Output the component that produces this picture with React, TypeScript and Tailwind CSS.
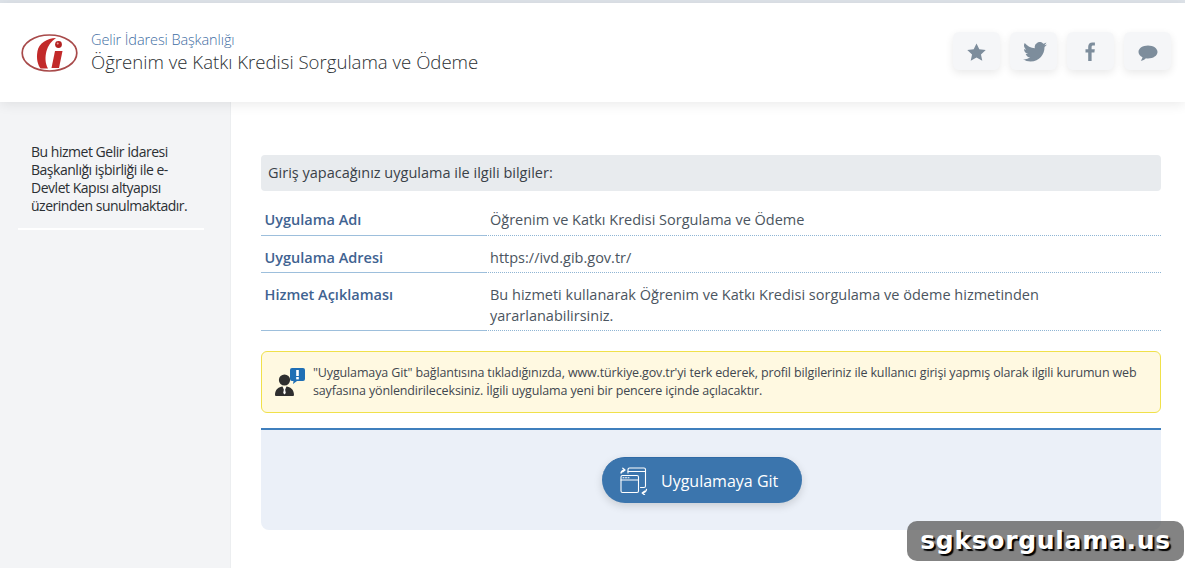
import { ReactNode } from "react"

function GibLogo() {
  return (
    <svg width="58" height="40" viewBox="0 0 58 40" className="block shrink-0">
      <ellipse cx="28.5" cy="20" rx="27.3" ry="18" fill="#fff" stroke="#a84a4a" strokeWidth="1.7" />
      <path d="M35 5 C26 5.500 18 10 16.500 18 C15 26 17 32 19.500 35.500 L27 35.500 C24 30 24 24 25.500 18 C27 12.500 30 8.500 35 5 Z" fill="#c22a2a" />
      <path d="M34 18 L41.500 18 L38 35 L30.500 35 Z" fill="#c22a2a" />
      <circle cx="37.500" cy="11.500" r="3.400" fill="#b32020" />
      <circle cx="36.700" cy="10.500" r="1" fill="#e9a0a0" />
    </svg>
  )
}

function IconButton({ children }: { children: ReactNode }) {
  return (
    <div className="flex h-[38px] w-[47px] items-center justify-center rounded-md bg-[#f5f6f8] pt-[1px] shadow-[0_3px_8px_rgba(0,0,0,0.09)]">
      {children}
    </div>
  )
}

function AdvisorIcon() {
  return (
    <svg width="32" height="30" viewBox="0 0 32 30" className="shrink-0">
      <path d="M18 1 H29 Q31 1 31 3 V12 Q31 14 29 14 H23 L19 17 L19.500 14 H18 Q16 14 16 12 V3 Q16 1 18 1 Z" fill="#1f6fb5" />
      <rect x="22.200" y="3" width="2.600" height="6" fill="#fff" />
      <rect x="22.200" y="10" width="2.600" height="2.400" fill="#fff" />
      <circle cx="10.500" cy="13" r="5.600" fill="#2f2f2f" />
      <path d="M1 28 C1 22 5 20 8.500 19.500 L10.500 24 L12.500 19.500 C16 20 20 22 20 28 Q20 29 19 29 H2 Q1 29 1 28 Z" fill="#2f2f2f" />
      <path d="M9.500 20 H11.500 L11 22 L11.800 26 L10.500 27.500 L9.200 26 L10 22 Z" fill="#fff" />
    </svg>
  )
}

function RedirectIcon() {
  return (
    <svg width="28" height="28" viewBox="0 0 28 28" fill="none" stroke="#fff" strokeWidth="1.100" strokeLinecap="round" strokeLinejoin="round" className="shrink-0">
      <path d="M8 6 V2.500 Q8 1 9.500 1 H24 Q25.500 1 25.500 2.500 V19 Q25.500 20.500 24 20.500 H20.500" />
      <path d="M8 4.500 H25.500" />
      <rect x="1" y="8.500" width="17.500" height="17" rx="1.500" />
      <path d="M1 13 H18.500" />
      <path d="M3 10.800 H4 M5.500 10.800 H6.500 M8 10.800 H9" />
      <path d="M1 6 Q1.500 3.500 4.500 3 M2.800 1.200 L5 3 L2.800 4.800" strokeWidth="1.300" />
      <path d="M26.500 22.500 Q26 25.500 22.500 26 M24.500 24.200 L22.200 26 L24.500 27.800" strokeWidth="1.300" />
    </svg>
  )
}

const rows = [
  { label: "Uygulama Adı", value: "Öğrenim ve Katkı Kredisi Sorgulama ve Ödeme", size: "h-[37px] pt-[10px]" },
  { label: "Uygulama Adresi", value: "https://ivd.gib.gov.tr/", size: "h-[37px] pt-[11px]" },
  {
    label: "Hizmet Açıklaması",
    value: "Bu hizmeti kullanarak Öğrenim ve Katkı Kredisi sorgulama ve ödeme hizmetinden yararlanabilirsiniz.",
    size: "h-[58px] pt-[11px]",
  },
]

export default function App() {
  return (
    <div className="relative h-[568px] w-[1185px] overflow-hidden bg-white font-['Open_Sans',sans-serif] text-[#454f5b]">
      <div className="h-[3px] bg-[#dfe4ea]" />

      {/* Header */}
      <header className="relative z-10 flex h-[99px] items-center justify-between bg-white pl-[21px] pr-[14px] shadow-[0_2px_12px_rgba(0,0,0,0.09)]">
        <div className="flex items-center">
          <GibLogo />
          <div className="ml-[12px]">
            <div className="text-[14.5px] leading-[19px] tracking-[-0.1px] font-light text-[#3f6ea3]">Gelir İdaresi Başkanlığı</div>
            <div className="text-[18.6px] leading-[26px] font-light text-[#2b2f33]">Öğrenim ve Katkı Kredisi Sorgulama ve Ödeme</div>
          </div>
        </div>
        <div className="-mt-[3px] flex gap-[10px]">
          <IconButton>
            <svg width="19" height="18" viewBox="0 0 24 23" fill="#7d8d9c">
              <path d="M12 0.500 L15.600 8 L23.800 9 L17.700 14.600 L19.400 22.700 L12 18.600 L4.600 22.700 L6.300 14.600 L0.200 9 L8.400 8 Z" />
            </svg>
          </IconButton>
          <IconButton>
            <svg width="24" height="20" viewBox="0 0 24 20" fill="#7d8d9c" className="ml-[2px]">
              <path d="M24 2.400c-.9.4-1.800.7-2.800.8 1-.6 1.800-1.600 2.200-2.700-1 .6-2 1-3.100 1.200A4.900 4.900 0 0 0 11.900 6.200C7.800 6 4.200 4 1.700.9a4.900 4.900 0 0 0 1.500 6.600c-.8 0-1.600-.2-2.200-.6v.1c0 2.400 1.700 4.400 3.900 4.800-.7.2-1.500.2-2.200.1.600 2 2.400 3.400 4.600 3.400A9.900 9.900 0 0 1 0 17.300 13.900 13.900 0 0 0 7.500 19.500c9.100 0 14-7.500 14-14v-.6c1-.7 1.800-1.600 2.500-2.500z" />
            </svg>
          </IconButton>
          <IconButton>
            <svg width="11" height="19" viewBox="0 0 11 19" fill="#7d8d9c">
              <path d="M3.200 19V10.500H0.500V7.200H3.200V4.800C3.200 1.900 4.900.5 7.400.5c1.200 0 2.200.1 2.500.1v2.900H8.200c-1.300 0-1.600.6-1.600 1.600v2.100h3.200l-.4 3.300H6.600V19z" />
            </svg>
          </IconButton>
          <IconButton>
            <svg width="20" height="18" viewBox="0 0 20 18" fill="#7d8d9c" className="mt-[2px]">
              <path d="M10 1.500C4.700 1.500.5 4.300.5 7.900c0 2.200 1.600 4.100 4 5.300-.2 1.300-.8 2.500-1.700 3.500 2-.3 3.800-1.200 5.100-2.500.7.100 1.400.2 2.100.2 5.300 0 9.500-2.900 9.500-6.500S15.300 1.500 10 1.500z" />
            </svg>
          </IconButton>
        </div>
      </header>

      <div className="flex h-[466px]">
        {/* Sidebar */}
        <aside className="w-[231px] shrink-0 border-r border-[#eceef0] bg-[#f3f4f6] pl-[18px] pt-[41px]">
          <div className="w-[186px] border-b-2 border-white pb-[13px] pl-[13px]">
            <p className="text-[14px] leading-[18px] tracking-[-0.48px] text-[#2b2f33]">
              Bu hizmet Gelir İdaresi
              <br />
              Başkanlığı işbirliği ile e-
              <br />
              Devlet Kapısı altyapısı
              <br />
              üzerinden sunulmaktadır.
            </p>
          </div>
        </aside>

        {/* Main content */}
        <main className="w-[930px] pl-[30px] pt-[53px]">
          <div className="flex h-[36px] items-center rounded-[4px] bg-[#e8ebee] px-[7px] text-[14.5px] text-[#3a4148]">
            Giriş yapacağınız uygulama ile ilgili bilgiler:
          </div>

          <div className="mt-[8px]">
            {rows.map((row) => (
              <div key={row.label} className="flex">
                <div className={`w-[225px] shrink-0 border-b border-[#9dbfdc] pl-[3.500px] text-[14.5px] leading-[21px] font-semibold text-[#3f6391] ${row.size}`}>
                  {row.label}
                </div>
                <div className={`flex-1 border-b border-dotted border-[#8fb5d4] pl-[4px] pr-[100px] text-[14.5px] leading-[21px] text-[#4b5560] ${row.size}`}>
                  {row.value}
                </div>
              </div>
            ))}
          </div>

          <div className="mt-[20px] flex h-[62px] items-center rounded-[6px] border border-[#f0e14a] bg-[#fff9e1] pl-[12px] pr-[14px]">
            <AdvisorIcon />
            <p className="ml-[7px] text-[12.5px] leading-[18px] tracking-[-0.14px] text-[#3f474f]">
              "Uygulamaya Git" bağlantısına tıkladığınızda, www.türkiye.gov.tr'yi terk ederek, profil bilgileriniz ile kullanıcı girişi yapmış olarak ilgili kurumun web sayfasına yönlendirileceksiniz. İlgili uygulama yeni bir pencere içinde açılacaktır.
            </p>
          </div>

          <div className="mt-[15px] flex h-[102px] items-center justify-center rounded-b-[8px] border-t-2 border-[#3f7fbd] bg-[#ebf0f8]">
            <button className="mr-[18px] flex h-[46px] w-[200px] items-center rounded-full border-t border-[#2f6aa5] bg-[#3b75ad] pl-[18px] text-[16px] text-white shadow-[0_3px_8px_rgba(0,0,0,0.15)]">
              <RedirectIcon />
              <span className="ml-[13px]">Uygulamaya Git</span>
            </button>
          </div>
        </main>
      </div>

      {/* Watermark */}
      <div className="absolute left-[907px] top-[521px] flex h-[40px] w-[277px] items-center justify-center rounded-[10px] bg-[rgba(90,90,90,0.75)] font-['DejaVu_Sans',sans-serif] text-[25px] font-bold tracking-[0.7px] text-white [text-shadow:2px_2px_1px_#000]">
        sgksorgulama.us
      </div>
    </div>
  )
}
